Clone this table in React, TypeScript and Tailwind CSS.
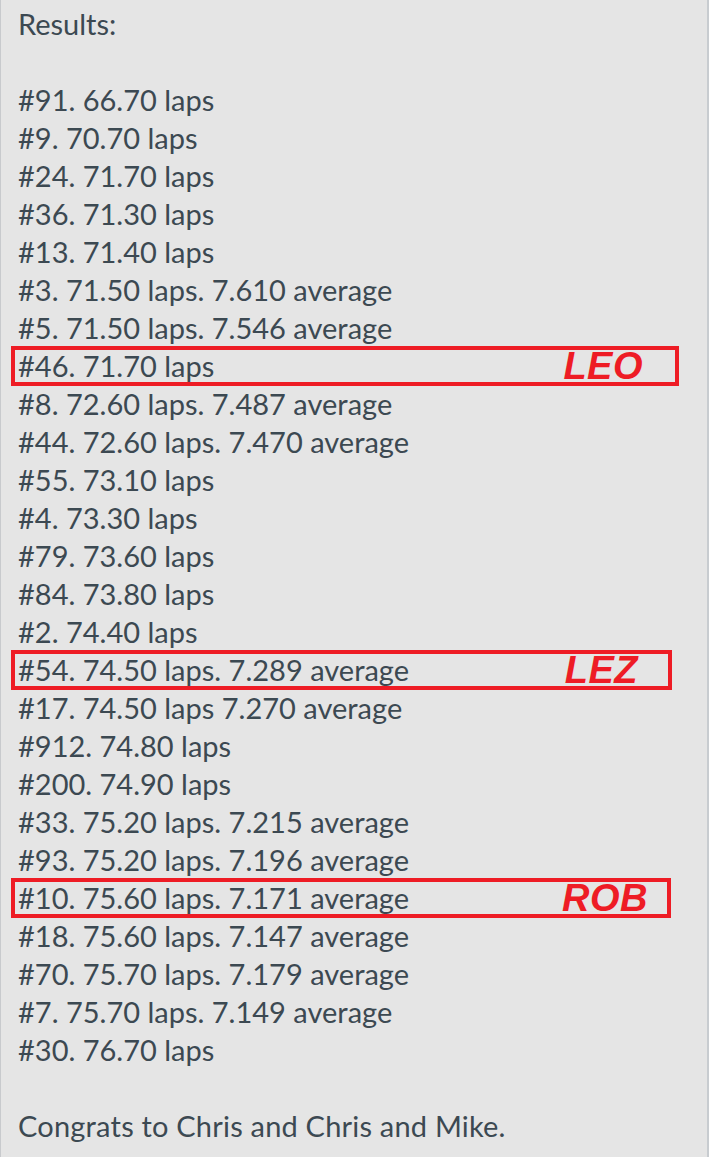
import React from "react";

type Row = { text: string; label?: string; mr?: string; pr?: string };

const rows: Row[] = [
  { text: "#91. 66.70 laps" },
  { text: "#9. 70.70 laps" },
  { text: "#24. 71.70 laps" },
  { text: "#36. 71.30 laps" },
  { text: "#13. 71.40 laps" },
  { text: "#3. 71.50 laps. 7.610 average" },
  { text: "#5. 71.50 laps. 7.546 average" },
  { text: "#46. 71.70 laps", label: "LEO", mr: "mr-[29px]", pr: "pr-[35px]" },
  { text: "#8. 72.60 laps. 7.487 average" },
  { text: "#44. 72.60 laps. 7.470 average" },
  { text: "#55. 73.10 laps" },
  { text: "#4. 73.30 laps" },
  { text: "#79. 73.60 laps" },
  { text: "#84. 73.80 laps" },
  { text: "#2. 74.40 laps" },
  { text: "#54. 74.50 laps. 7.289 average", label: "LEZ", mr: "mr-[36px]", pr: "pr-[33px]" },
  { text: "#17. 74.50 laps 7.270 average" },
  { text: "#912. 74.80 laps" },
  { text: "#200. 74.90 laps" },
  { text: "#33. 75.20 laps. 7.215 average" },
  { text: "#93. 75.20 laps. 7.196 average" },
  { text: "#10. 75.60 laps. 7.171 average", label: "ROB", mr: "mr-[37px]", pr: "pr-[22px]" },
  { text: "#18. 75.60 laps. 7.147 average" },
  { text: "#70. 75.70 laps. 7.179 average" },
  { text: "#7. 75.70 laps. 7.149 average" },
  { text: "#30. 76.70 laps" },
];

const labelFont = { fontFamily: "'Liberation Sans', Arial, sans-serif" };

function ResultRow({ row }: { row: Row }) {
  if (!row.label) return <div>{row.text}</div>;
  return (
    <div
      className={`flex items-center justify-between -ml-[6px] pl-[6px] outline-4 outline-offset-[-3px] outline-[#ee1c25] ${row.mr} ${row.pr}`}
    >
      <span>{row.text}</span>
      <span
        className="text-[38px] leading-[38px] font-bold italic text-[#ee1c25] tracking-[0.5px]"
        style={labelFont}
      >
        {row.label}
      </span>
    </div>
  );
}

export default function App() {
  return (
    <div className="w-[709px] h-[1157px] overflow-hidden bg-[#e5e5e5] border-l border-l-[#c8cacd] border-r-2 border-r-[#c8ccd0]">
      <div
        className="flex flex-col pt-[5px] pl-[17px] text-[29px] leading-[38px] text-[#3c4952]"
        style={{ fontFamily: "Lato, 'Noto Sans', sans-serif" }}
      >
        <div>Results:</div>
        <div className="h-[38px]" />
        {rows.map((r) => (
          <ResultRow key={r.text} row={r} />
        ))}
        <div className="h-[38px]" />
        <div className="tracking-[0.2px]">Congrats to Chris and Chris and Mike.</div>
      </div>
    </div>
  );
}
